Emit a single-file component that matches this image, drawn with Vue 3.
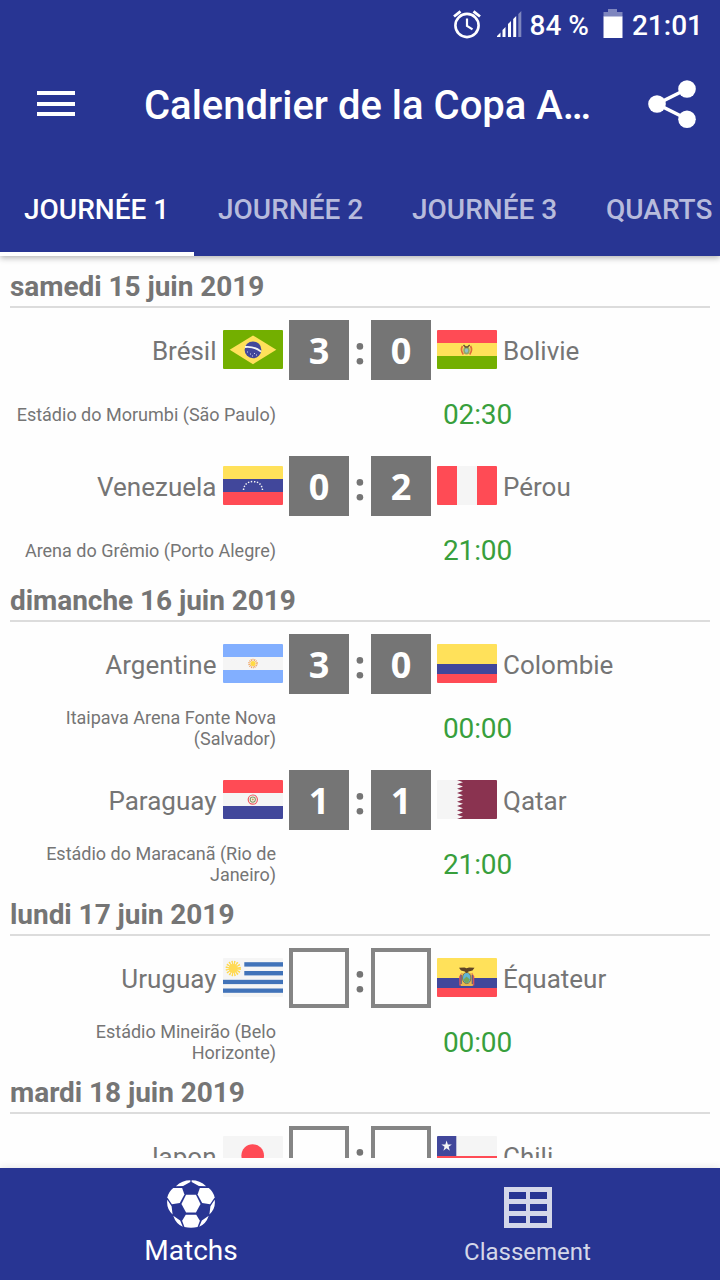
<script setup>
import { ref } from 'vue'

const tabs = ['JOURNÉE 1', 'JOURNÉE 2', 'JOURNÉE 3', 'QUARTS']
const activeTab = ref(0)

// stripes: [x, y, width, height, color]
const flags = {
  br: [[0, 0, 60, 39, '#73af00']],
  bo: [[0, 0, 60, 13, '#ff4b55'], [0, 13, 60, 13, '#ffe15a'], [0, 26, 60, 13, '#73af00']],
  ve: [[0, 0, 60, 13, '#ffe15a'], [0, 13, 60, 13, '#41479b'], [0, 26, 60, 13, '#ff4b55']],
  pe: [[0, 0, 20, 39, '#ff4b55'], [20, 0, 20, 39, '#f5f5f5'], [40, 0, 20, 39, '#ff4b55']],
  ar: [[0, 0, 60, 13, '#82afff'], [0, 13, 60, 13, '#f5f5f5'], [0, 26, 60, 13, '#82afff']],
  co: [[0, 0, 60, 20, '#ffe15a'], [0, 20, 60, 10, '#41479b'], [0, 30, 60, 9, '#ff4b55']],
  py: [[0, 0, 60, 13, '#ff4b55'], [0, 13, 60, 13, '#f5f5f5'], [0, 26, 60, 13, '#41479b']],
  qa: [[0, 0, 60, 39, '#f5f5f5']],
  uy: [
    [0, 0, 60, 39, '#f5f5f5'],
    [21.3, 4.2, 38.7, 4.4, '#4173b9'],
    [21.3, 13, 38.7, 4.4, '#4173b9'],
    [0, 21.8, 60, 4.3, '#4173b9'],
    [0, 30.5, 60, 4.3, '#4173b9']
  ],
  ec: [[0, 0, 60, 20, '#ffe15a'], [0, 20, 60, 10, '#41479b'], [0, 30, 60, 9, '#ff4b55']],
  jp: [[0, 0, 60, 39, '#f5f5f5']],
  cl: [[0, 0, 60, 20, '#f5f5f5'], [0, 20, 60, 19, '#ff4b55'], [0, 0, 19.3, 20, '#41479b']]
}

const days = [
  {
    date: 'samedi 15 juin 2019',
    matches: [
      { home: 'Brésil', away: 'Bolivie', flags: ['br', 'bo'], score: [3, 0], venue: 'Estádio do Morumbi (São Paulo)', time: '02:30' },
      { home: 'Venezuela', away: 'Pérou', flags: ['ve', 'pe'], score: [0, 2], venue: 'Arena do Grêmio (Porto Alegre)', time: '21:00' }
    ]
  },
  {
    date: 'dimanche 16 juin 2019',
    matches: [
      { home: 'Argentine', away: 'Colombie', flags: ['ar', 'co'], score: [3, 0], venue: 'Itaipava Arena Fonte Nova (Salvador)', time: '00:00' },
      { home: 'Paraguay', away: 'Qatar', flags: ['py', 'qa'], score: [1, 1], venue: 'Estádio do Maracanã (Rio de Janeiro)', time: '21:00' }
    ]
  },
  {
    date: 'lundi 17 juin 2019',
    matches: [
      { home: 'Uruguay', away: 'Équateur', flags: ['uy', 'ec'], score: null, venue: 'Estádio Mineirão (Belo Horizonte)', time: '00:00' }
    ]
  },
  {
    date: 'mardi 18 juin 2019',
    matches: [
      { home: 'Japon', away: 'Chili', flags: ['jp', 'cl'], score: null, venue: '', time: '' }
    ]
  }
]
</script>

<template>
  <div class="screen">
    <header>
      <div class="status">
        <svg class="alarm" width="30" height="30" viewBox="0 0 30 30" fill="none" stroke="#fff">
          <circle cx="15" cy="15.5" r="11.6" stroke-width="2.6" />
          <path d="M15 8.5v7.5l5.5 3.4" stroke-width="2.2" />
          <path d="M2 6.5L8.5 1.3M28 6.5L21.5 1.3" stroke-width="2.8" />
        </svg>
        <svg class="signal" width="25" height="26" viewBox="0 0 25 26">
          <path fill="#fff" d="M0 26v-1l3.500-3.500V26zM5.500 26v-7l3-3v10zM11 26V13l3-3v16zM16.200 26V8l3-3v21z" />
          <path fill="#7e86be" d="M21.300 26V3l3-3v26z" />
        </svg>
        <span class="percent">84 %</span>
        <svg class="battery" width="20" height="30" viewBox="0 0 20 30">
          <path fill="#7e86be" d="M5 0h9v3h5.500v5H.5V3H5z" />
          <path fill="#fff" d="M.5 7.500h19V29H.5z" />
        </svg>
        <span class="clock">21:01</span>
      </div>

      <div class="toolbar">
        <button class="menu-btn" aria-label="Menu">
          <span></span>
          <span></span>
          <span></span>
        </button>
        <h1>Calendrier de la Copa A…</h1>
        <button class="share-btn" aria-label="Partager">
          <svg width="48" height="48" viewBox="0 0 48 48" fill="#fff">
            <path d="M39 9L9 24l30 15" fill="none" stroke="#fff" stroke-width="3.600" />
            <circle cx="39" cy="9" r="8.800" />
            <circle cx="9" cy="24" r="8.800" />
            <circle cx="39" cy="39.200" r="8.800" />
          </svg>
        </button>
      </div>

      <nav class="tabs">
        <button
          v-for="(tab, i) in tabs"
          :key="tab"
          :class="{ active: activeTab === i }"
          @click="activeTab = i"
        >{{ tab }}</button>
      </nav>
    </header>

    <main>
      <section v-for="day in days" :key="day.date">
        <h2>{{ day.date }}</h2>
        <article v-for="match in day.matches" :key="match.home">
          <div class="teams">
            <template v-for="(code, side) in match.flags" :key="code">
              <div v-if="side === 1" class="score">
                <span class="box" :class="{ empty: !match.score }">{{ match.score ? match.score[0] : '' }}</span>
                <svg class="colon" width="22" height="60" viewBox="0 0 22 60" fill="#757575">
                  <circle cx="10.900" cy="26.400" r="3.300" />
                  <circle cx="10.900" cy="41.200" r="3.300" />
                </svg>
                <span class="box" :class="{ empty: !match.score }">{{ match.score ? match.score[1] : '' }}</span>
              </div>
              <div class="team" :class="side === 0 ? 'home' : 'away'">
                <span class="name">{{ side === 0 ? match.home : match.away }}</span>
                <svg class="flag" width="60" height="39" viewBox="0 0 60 39">
                  <rect
                    v-for="(s, i) in flags[code]"
                    :key="i"
                    :x="s[0]"
                    :y="s[1]"
                    :width="s[2]"
                    :height="s[3]"
                    :fill="s[4]"
                  />
                  <g v-if="code === 'br'">
                    <path d="M6.700 19.700L30 5.400l23.300 14.300L30 34.200z" fill="#ffe15a" />
                    <circle cx="30" cy="19.800" r="8.400" fill="#41479b" />
                    <path d="M22 17q9-1 16 4.600" fill="none" stroke="#f5f5f5" stroke-width="1.800" />
                    <path d="M24 22h1M27 24h1M31 23.500h1M29 26h1M33 25h1" stroke="#d5d8ee" />
                  </g>
                  <g v-else-if="code === 'bo'">
                    <path d="M25.500 16q-2.400 4 .8 8.400M33.500 16q2.400 4-.8 8.400" fill="none" stroke="#e06a3c" stroke-width="1.700" />
                    <ellipse cx="29.500" cy="20.600" rx="3.200" ry="4" fill="#8fa66a" />
                    <ellipse cx="29.500" cy="20.600" rx="1.600" ry="2.200" fill="#8fc3c9" />
                    <path d="M26.500 15l2 2h2l2.200-2" fill="none" stroke="#6b5136" stroke-width="1.500" />
                  </g>
                  <path
                    v-else-if="code === 've'"
                    d="M20.500 24Q21.500 15.600 30 15.600T39.500 24"
                    fill="none"
                    stroke="#f5f5f5"
                    stroke-width="1.500"
                    stroke-dasharray="1.400 1.600"
                  />
                  <g v-else-if="code === 'ar'">
                    <circle cx="30" cy="19.500" r="3.800" fill="none" stroke="#f0a05a" stroke-width="2" stroke-dasharray=".9 .8" />
                    <circle cx="30" cy="19.500" r="2.600" fill="#ffda44" />
                  </g>
                  <g v-else-if="code === 'py'" fill="none">
                    <circle cx="29.800" cy="19.600" r="4.600" stroke="#f05a60" stroke-width="1.200" />
                    <circle cx="29.800" cy="19.600" r="2.600" stroke="#8b9a62" stroke-width="1.100" />
                    <circle cx="29.800" cy="19.600" r="1" fill="#c9a54c" />
                  </g>
                  <path
                    v-else-if="code === 'qa'"
                    fill="#8a3350"
                    d="M60 0H20l6 2.200-6 2.100 6 2.200-6 2.200 6 2.100-6 2.200 6 2.200-6 2.100 6 2.200-6 2.200 6 2.100-6 2.200 6 2.200-6 2.100 6 2.200-6 2.200 6 2.100-6 2.200H60z"
                  />
                  <g v-else-if="code === 'uy'">
                    <circle cx="10.300" cy="10.500" r="6" fill="none" stroke="#ffd84c" stroke-width="3.400" stroke-dasharray="1.300 1.050" />
                    <circle cx="10.300" cy="10.500" r="4.700" fill="#ffda55" />
                  </g>
                  <g v-else-if="code === 'ec'">
                    <path d="M24.500 14.500l-2.300 4v9h3.300zM35 14.500l2.300 4v9H34z" fill="#d9545a" />
                    <path d="M24.300 15l-.5 13h12l-.5-13z" fill="#e9b84f" />
                    <path d="M24.200 17v9M35.300 17v9" stroke="#5b5a86" stroke-width="1.200" />
                    <ellipse cx="29.700" cy="20" rx="4.200" ry="5.600" fill="#5fb6d6" stroke="#7b6a3a" stroke-width=".8" />
                    <path d="M26.500 21.500l3-3 3.400 3-2 3.200h-2.800z" fill="#74a65a" />
                    <path d="M22 9.800l5.500-.3 2.200.8 2.300-.8 5.500.3-2 2.700-4 1-1.800 1.800-1.900-1.800-3.800-1z" fill="#5e4426" />
                  </g>
                  <circle v-else-if="code === 'jp'" cx="29.700" cy="19.500" r="11.300" fill="#ff4b55" />
                  <path
                    v-else-if="code === 'cl'"
                    fill="#f5f5f5"
                    d="M9.600 4.500l1.250 3.900h4l-3.200 2.400 1.200 3.900-3.250-2.400-3.250 2.400 1.200-3.900-3.200-2.400h4z"
                  />
                </svg>
              </div>
            </template>
          </div>
          <div class="details">
            <p class="venue">{{ match.venue }}</p>
            <p class="time">{{ match.time }}</p>
          </div>
        </article>
      </section>
    </main>

    <footer>
      <button class="current">
        <svg class="ball" width="48" height="48" viewBox="110 58 146 146" fill="#fff">
          <path d="M168 103h30l14 28-14 26h-30l-14-26z" />
          <path d="M129 82h27l7 20-14 26-24 4-14-21q4-18 18-29z" />
          <path d="M237 82h-27l-7 20 14 26 24 4 14-21q-4-18-18-29z" />
          <path d="M167 164h32l11 18-7 19q-20 5-40 0l-7-19z" />
          <path d="M137 77q19-18 44-18v5l-22 12zM229 77q-19-18-44-18v5l22 12z" />
          <path d="M111 118l13 20 3 25q-20-18-16-45zM255 118l-13 20-3 25q20-18 16-45z" />
          <path d="M129 167l21 14 8 19q-21-8-29-33zM237 167l-21 14-8 19q21-8 29-33z" />
        </svg>
        <span>Matchs</span>
      </button>
      <button>
        <svg class="table" width="48" height="41" viewBox="0 0 48 41">
          <path
            fill="#d4d7e9"
            fill-rule="evenodd"
            d="M0 0h48v41H0zM5 5v7h17V5zM26 5v7h17V5zM5 17v7h17v-7zM26 17v7h17v-7zM5 29v7h17v-7zM26 29v7h17v-7z"
          />
        </svg>
        <span>Classement</span>
      </button>
    </footer>
  </div>
</template>

<style>
body {
  margin: 0;
  background: #fff;
}
</style>

<style scoped>
.screen {
  width: 720px;
  height: 1280px;
  display: flex;
  flex-direction: column;
  overflow: hidden;
  background: #fefefe;
  color: #757575;
  font-family: Roboto, sans-serif;
}

button {
  background: none;
  border: none;
  padding: 0;
  font: inherit;
  color: inherit;
  cursor: pointer;
}

h1, h2, p {
  margin: 0;
}

svg {
  display: block;
  flex: none;
}

header {
  height: 256px;
  flex: none;
  display: flex;
  flex-direction: column;
  background: #283593;
  color: #fff;
  box-shadow: 0 2px 6px rgba(0, 0, 0, 0.3);
  z-index: 1;
}

.status {
  height: 50px;
  display: flex;
  align-items: center;
  justify-content: flex-end;
  padding-right: 17px;
  font-size: 28px;
  font-weight: 500;
  white-space: nowrap;
}

.alarm {
  margin-bottom: 1px;
}

.signal {
  margin: 0 8px 2px 15px;
}

.battery {
  margin: 0 9px 2px 14px;
}

.toolbar {
  height: 108px;
  display: flex;
  align-items: center;
  padding: 0 24px 0 37px;
}

.menu-btn {
  width: 38px;
  margin-bottom: 1px;
  display: flex;
  flex-direction: column;
  gap: 6.500px;
}

.menu-btn span {
  height: 4px;
  background: #fff;
}

h1 {
  flex: 1;
  padding: 4px 0 0 69px;
  font-size: 40px;
  font-weight: 500;
  line-height: 48px;
  white-space: nowrap;
}

.tabs {
  flex: 1;
  display: flex;
  overflow: hidden;
}

.tabs button {
  flex: none;
  box-sizing: border-box;
  min-width: 194px;
  padding: 8px 24px 0;
  border-bottom: 4px solid transparent;
  font-size: 28px;
  font-weight: 500;
  color: #b7bbdc;
  text-align: left;
  white-space: nowrap;
}

.tabs .active {
  color: #fff;
  border-color: #fff;
}

main {
  height: 890px;
  flex: none;
  margin-bottom: 10px;
  padding: 12px 10px 0;
  overflow: hidden;
}

h2 {
  height: 38px;
  margin-bottom: 2px;
  border-bottom: 2px solid #dcdcdc;
  font-size: 28px;
  font-weight: 700;
  line-height: 37px;
  letter-spacing: -0.05px;
}

article {
  height: 136px;
  box-sizing: border-box;
  padding-top: 10px;
}

.teams {
  display: flex;
  gap: 6px;
}

.team {
  flex: 1;
  display: flex;
  align-items: center;
  gap: 6px;
  font-size: 26px;
}

.name {
  padding-top: 2px;
}

.home {
  justify-content: flex-end;
}

.home .name {
  margin-right: 0.5px;
}

.away {
  flex-direction: row-reverse;
  justify-content: flex-end;
}

.flag {
  margin-bottom: 1px;
  border-radius: 1px;
}

.score {
  display: flex;
}

.box {
  width: 60px;
  height: 60px;
  box-sizing: border-box;
  background: #757575;
  color: #fff;
  font: 700 36px/61px 'Open Sans', sans-serif;
  text-align: center;
}

.empty {
  background: none;
  border: 4px solid #858585;
}

.details {
  height: 66px;
  box-sizing: border-box;
  display: flex;
  align-items: center;
  padding-top: 2px;
}

.venue {
  width: 266px;
  font-size: 18px;
  line-height: 21px;
  text-align: right;
}

.time {
  margin-left: 167px;
  font-size: 28px;
  letter-spacing: -0.15px;
  color: #389f3c;
}

footer {
  height: 112px;
  flex: none;
  display: flex;
  background: #283593;
  color: #d4d7e9;
  box-shadow: 0 0 8px rgba(0, 0, 0, 0.12);
}

footer button {
  width: 382px;
  display: flex;
  flex-direction: column;
  align-items: center;
  font-size: 24px;
}

footer button + button {
  width: 291px;
}

footer .current {
  color: #fff;
  font-size: 28px;
}

.ball {
  margin: 12px 0 6px;
}

.table {
  margin: 19px 0 10px;
}
</style>
